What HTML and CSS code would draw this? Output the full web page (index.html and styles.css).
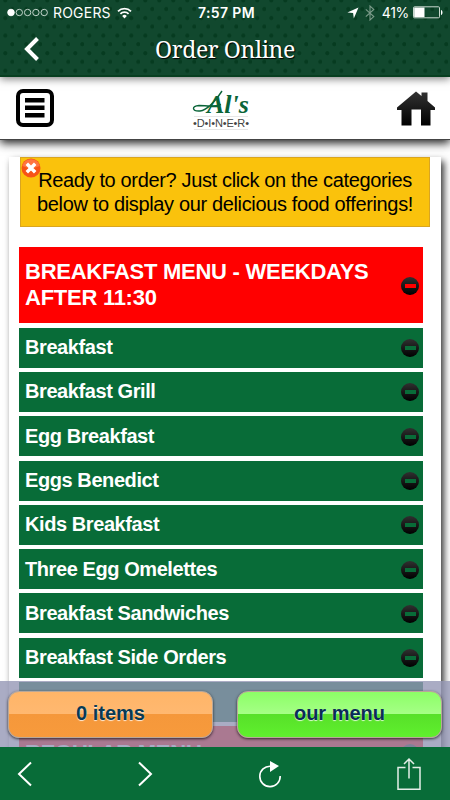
FILE: index.html
```html
<!DOCTYPE html>
<html lang="en">
<head>
    <meta charset="UTF-8">
    <meta name="viewport" content="width=device-width, initial-scale=1.0">
    <title>Order Online - Al's Diner</title>
    <link rel="stylesheet" href="styles.css">
</head>
<body>
    <header class="top">
        <div class="status">
            <div class="carrier">
                <svg width="42" height="9" viewBox="0 0 42 9" fill="none" stroke="#d5e2da" stroke-width="0.9">
                    <circle cx="4" cy="4.5" r="3.3" fill="#fff" stroke="#fff"/>
                    <circle cx="12.3" cy="4.5" r="3.2"/>
                    <circle cx="20.6" cy="4.5" r="3.2"/>
                    <circle cx="28.9" cy="4.5" r="3.2"/>
                    <circle cx="37.2" cy="4.5" r="3.2"/>
                </svg>
                <span>ROGERS</span>
                <svg class="wifi" width="15" height="12" viewBox="0 0 15 12" fill="none" stroke="#fff" stroke-width="1.8">
                    <path d="M1 4.3a9.2 9.2 0 0 1 13 0M3.4 6.8a5.8 5.8 0 0 1 8.2 0"/>
                    <path d="M7.5 11.4L5.2 9a3.2 3.2 0 0 1 4.6 0z" fill="#fff" stroke="none"/>
                </svg>
            </div>
            <div class="time">7:57 PM</div>
            <div class="power">
                <svg width="12" height="12" viewBox="0 0 12 12" fill="#fff"><path d="M11.5 .5L6.8 11.5 6.1 6 .4 5.5z"/></svg>
                <svg class="bluetooth" width="10" height="16" viewBox="0 0 10 16" fill="none" stroke="#7d9c8b" stroke-width="1.1"><path d="M.8 4.4l8 7.2L5 15V1l3.8 3.4-8 7.2"/></svg>
                <span>41%</span>
                <svg class="battery" width="31" height="13" viewBox="0 0 31 13">
                    <rect x=".5" y=".8" width="26" height="11" rx="1" fill="none" stroke="#c9d8cf"/>
                    <path d="M1.2 1.5H11.5v9.6H1.2z" fill="#fff"/>
                    <path d="M28 4c2 .4 2 4.600 0 5z" fill="#fff"/>
                </svg>
            </div>
        </div>
        <div class="titlebar">
            <svg class="back" width="18" height="26" viewBox="0 0 18 26" fill="none" stroke="#fff" stroke-width="4"><path d="M14.500 2.500L4 13l10.500 10.500"/></svg>
            <h1>Order Online</h1>
        </div>
    </header>

    <nav class="brandbar">
        <svg class="list" width="38" height="38" viewBox="0 0 38 38">
            <rect x="2" y="2" width="34" height="34" rx="5" fill="#fff" stroke="#000" stroke-width="4"/>
            <path d="M9 9h19.500v4.600H9zM9 16.500h19.500v4.600H9zM9 24h19.500v4.600H9z"/>
        </svg>
        <svg class="logo" width="62" height="50" viewBox="0 0 62 50">
            <text x="17" y="29.500" class="logo-name">Al's</text>
            <path d="M32 8C26 17 18 27 10 28c-8 .500-9-5-1-5.500 7 0 14 2 22-1" fill="none" stroke="#0a6438" stroke-width="1.400"/>
            <path d="M4 33.500h54M4 46.500h54" stroke="#ddd" stroke-width=".7"/>
            <text x="3" y="44" class="logo-sub" textLength="56">•D•I•N•E•R•</text>
        </svg>
        <svg class="home" width="38" height="35" viewBox="0 0 38 35">
            <defs><linearGradient id="ink" x1="0" y1="0" x2="0" y2="1"><stop offset="0" stop-color="#333"/><stop offset="1" stop-color="#000"/></linearGradient></defs>
            <path d="M19 .500l5.500 4.500V1.500h6V10L38 16.500V19h-4.500v15.500H24V18.500h-9.500v16h-10V19H0v-2.500z" fill="url(#ink)"/>
        </svg>
    </nav>

    <main>
        <section class="panel">
            <div class="notice">
                <svg class="close" width="20" height="20" viewBox="0 0 20 20">
                    <circle cx="10" cy="10" r="9.500" fill="#f75316"/>
                    <path d="M1.300 8a9 9 0 0 1 17.400 0q-8.500 4-17.400 0" fill="#ff7540"/>
                    <path d="M5.800 5.800l8.400 8.400M14.200 5.800l-8.400 8.400" stroke="#fff" stroke-width="3.500"/>
                </svg>
                Ready to order? Just click on the categories<br>below to display our delicious food offerings!
            </div>
            <ul class="menu">
                <li class="group"><span>BREAKFAST MENU - WEEKDAYS<br>AFTER 11:30</span><i class="minus"></i></li>
                <li><span>Breakfast</span><i class="minus"></i></li>
                <li><span>Breakfast Grill</span><i class="minus"></i></li>
                <li><span>Egg Breakfast</span><i class="minus"></i></li>
                <li><span>Eggs Benedict</span><i class="minus"></i></li>
                <li><span>Kids Breakfast</span><i class="minus"></i></li>
                <li><span>Three Egg Omelettes</span><i class="minus"></i></li>
                <li><span>Breakfast Sandwiches</span><i class="minus"></i></li>
                <li><span>Breakfast Side Orders</span><i class="minus"></i></li>
                <li></li>
                <li class="group last"><span>REGULAR MENU</span><i class="minus"></i></li>
            </ul>
        </section>
        <div class="orderbar">
            <button class="items">0 items</button>
            <button class="ours">our menu</button>
        </div>
    </main>

    <footer class="toolbar">
        <svg width="16" height="26" viewBox="0 0 16 26" fill="none" stroke="#fff" stroke-width="2"><path d="M14 1.500L2 13l12 11.500"/></svg>
        <svg width="16" height="26" viewBox="0 0 16 26" fill="none" stroke="#fff" stroke-width="2"><path d="M2 1.500L14 13 2 24.500"/></svg>
        <svg width="24" height="28" viewBox="0 0 24 28" fill="none" stroke="#fff" stroke-width="1.600"><path d="M12.500 6.200A10.200 10.200 0 1 0 22.200 16"/><path d="M12 1l9 5-9 6z" fill="#fff" stroke="none"/></svg>
        <svg width="26" height="34" viewBox="0 0 26 34" fill="none" stroke="#e3eee7" stroke-width="1.500"><path d="M9.500 10.500H2v21.700h22V10.500h-7.500M13 21.500V2M8 7l5-5 5 5"/></svg>
    </footer>
</body>
</html>
```
FILE: styles.css
```css
* {
    box-sizing: border-box;
}

body {
    display: flex;
    flex-direction: column;
    height: 800px;
    margin: 0;
    overflow: hidden;
    background-color: #fff;
    font-family: "Liberation Sans", Arial, sans-serif;
}

svg {
    display: block;
    flex: none;
}

/* Header */
.top {
    flex: none;
    position: relative;
    z-index: 3;
    height: 77px;
    color: #fff;
    background-color: #11482e;
    background-image:
        radial-gradient(circle at 5.3px 9px, #063b20 1.6px, transparent 2.5px),
        radial-gradient(circle at 12.3px 9px, #063b20 1.6px, transparent 2.5px);
    background-size: 14px 17.6px;
    background-position: 0 9px, 0 0;
    border-bottom: 2px solid #073f20;
    box-shadow: 0 2px 8px rgba(0, 0, 0, 0.5);
}

.status {
    display: grid;
    grid-template-columns: 1fr auto 1fr;
    align-items: center;
    height: 25px;
    padding: 0 6px 0 7px;
    font-family: Inter, Roboto, sans-serif;
    font-size: 14px;
}

.carrier,
.power {
    display: flex;
    align-items: center;
}

.carrier span {
    margin-left: 4px;
    letter-spacing: 0.2px;
}

.wifi {
    margin-left: 6px;
}

.time {
    padding-left: 2px;
    font-weight: 600;
    letter-spacing: 0.4px;
}

.power {
    justify-content: flex-end;
}

.bluetooth {
    margin: 0 7px 0 6px;
}

.power span {
    letter-spacing: -0.3px;
}

.battery {
    margin-left: 4px;
}

.titlebar {
    display: grid;
    grid-template-columns: 1fr auto 1fr;
    align-items: center;
    height: 48px;
    padding: 0 23px;
}

h1 {
    margin: 0;
    font-family: "Noto Serif", "Liberation Serif", serif;
    font-size: 23px;
    font-weight: normal;
    letter-spacing: -0.4px;
    text-shadow: 1px 1px 1px #000;
}

/* Logo bar */
.brandbar {
    flex: none;
    position: relative;
    z-index: 2;
    display: grid;
    grid-template-columns: 1fr auto 1fr;
    align-items: center;
    height: 63px;
    padding: 0 15px 0 16px;
    background-color: #fff;
    border-bottom: 1px solid #444;
    box-shadow: 0 3px 9px rgba(0, 0, 0, 0.9);
}

.logo {
    margin-right: 9px;
}

.home {
    justify-self: end;
}

.logo-name {
    font-family: "Liberation Serif", serif;
    font-size: 26px;
    font-style: italic;
    font-weight: bold;
    fill: #0a6438;
}

.logo-sub {
    font-size: 11px;
    fill: #444;
}

/* Menu */
main {
    flex: 1;
    position: relative;
    overflow: hidden;
    padding: 17px 9px 0;
}

.panel {
    height: 650px;
    padding: 0 11px 0 10px;
    background-color: #fff;
    box-shadow: 3px 4px 7px rgba(0, 0, 0, 0.8);
}

.notice {
    position: relative;
    height: 70px;
    margin-left: 1px;
    padding-top: 10px;
    background-color: #fac20c;
    border: 1px solid #d9a520;
    font-size: 20px;
    line-height: 24px;
    letter-spacing: -0.35px;
    text-align: center;
    white-space: nowrap;
}

.close {
    position: absolute;
    top: 0;
    left: 0;
}

.menu {
    display: flex;
    flex-direction: column;
    gap: 4.3px;
    width: 404px;
    margin: 20px 0 0;
    padding: 0;
    list-style: none;
}

.menu li {
    flex: none;
    display: flex;
    align-items: center;
    justify-content: space-between;
    height: 40px;
    padding: 0 4px 0 6px;
    color: #fff;
    background-color: #086c38;
    font-size: 20px;
    font-weight: bold;
    letter-spacing: -0.42px;
}

.menu .group {
    height: 76.4px;
    background-color: #f00;
    font-size: 22px;
    line-height: 26px;
    letter-spacing: -0.26px;
}

.minus {
    width: 18px;
    height: 18px;
    margin-top: 1px;
    border-radius: 50%;
    background: linear-gradient(currentColor, currentColor) center / 11px 4px no-repeat, linear-gradient(#303030, #000);
    color: #086c38;
}

.group .minus {
    color: #f00;
}

.menu .last {
    height: 53px;
}

/* Order buttons */
.orderbar {
    position: absolute;
    left: 0;
    right: 0;
    bottom: 0;
    display: flex;
    justify-content: space-between;
    height: 66px;
    padding: 10px 8px 9px;
    background-color: rgba(149, 151, 181, 0.8);
}

button {
    width: 205px;
    height: 47px;
    padding: 0 0 2px;
    border: 1px solid #b9a798;
    border-radius: 11px;
    color: #073a55;
    font-family: "Liberation Sans", Arial, sans-serif;
    font-size: 20px;
    font-weight: bold;
    text-shadow: 0 1px 1px rgba(255, 255, 255, 0.8);
    box-shadow: 0 1px 3px rgba(0, 0, 0, 0.7);
}

.items {
    background: linear-gradient(#ffb568, #ffb870 49%, #f5983b 50%, #f79a3c);
}

.ours {
    background: linear-gradient(#8cff66, #a5ff86 49%, #57e029 50%, #60f02e);
    color: #0a2c58;
}

/* Browser toolbar */
.toolbar {
    flex: none;
    position: relative;
    z-index: 3;
    display: grid;
    grid-template-columns: 120px 121px 1fr auto;
    align-items: center;
    height: 53px;
    padding: 0 28px 0 17px;
    background-color: #086c38;
}
```
